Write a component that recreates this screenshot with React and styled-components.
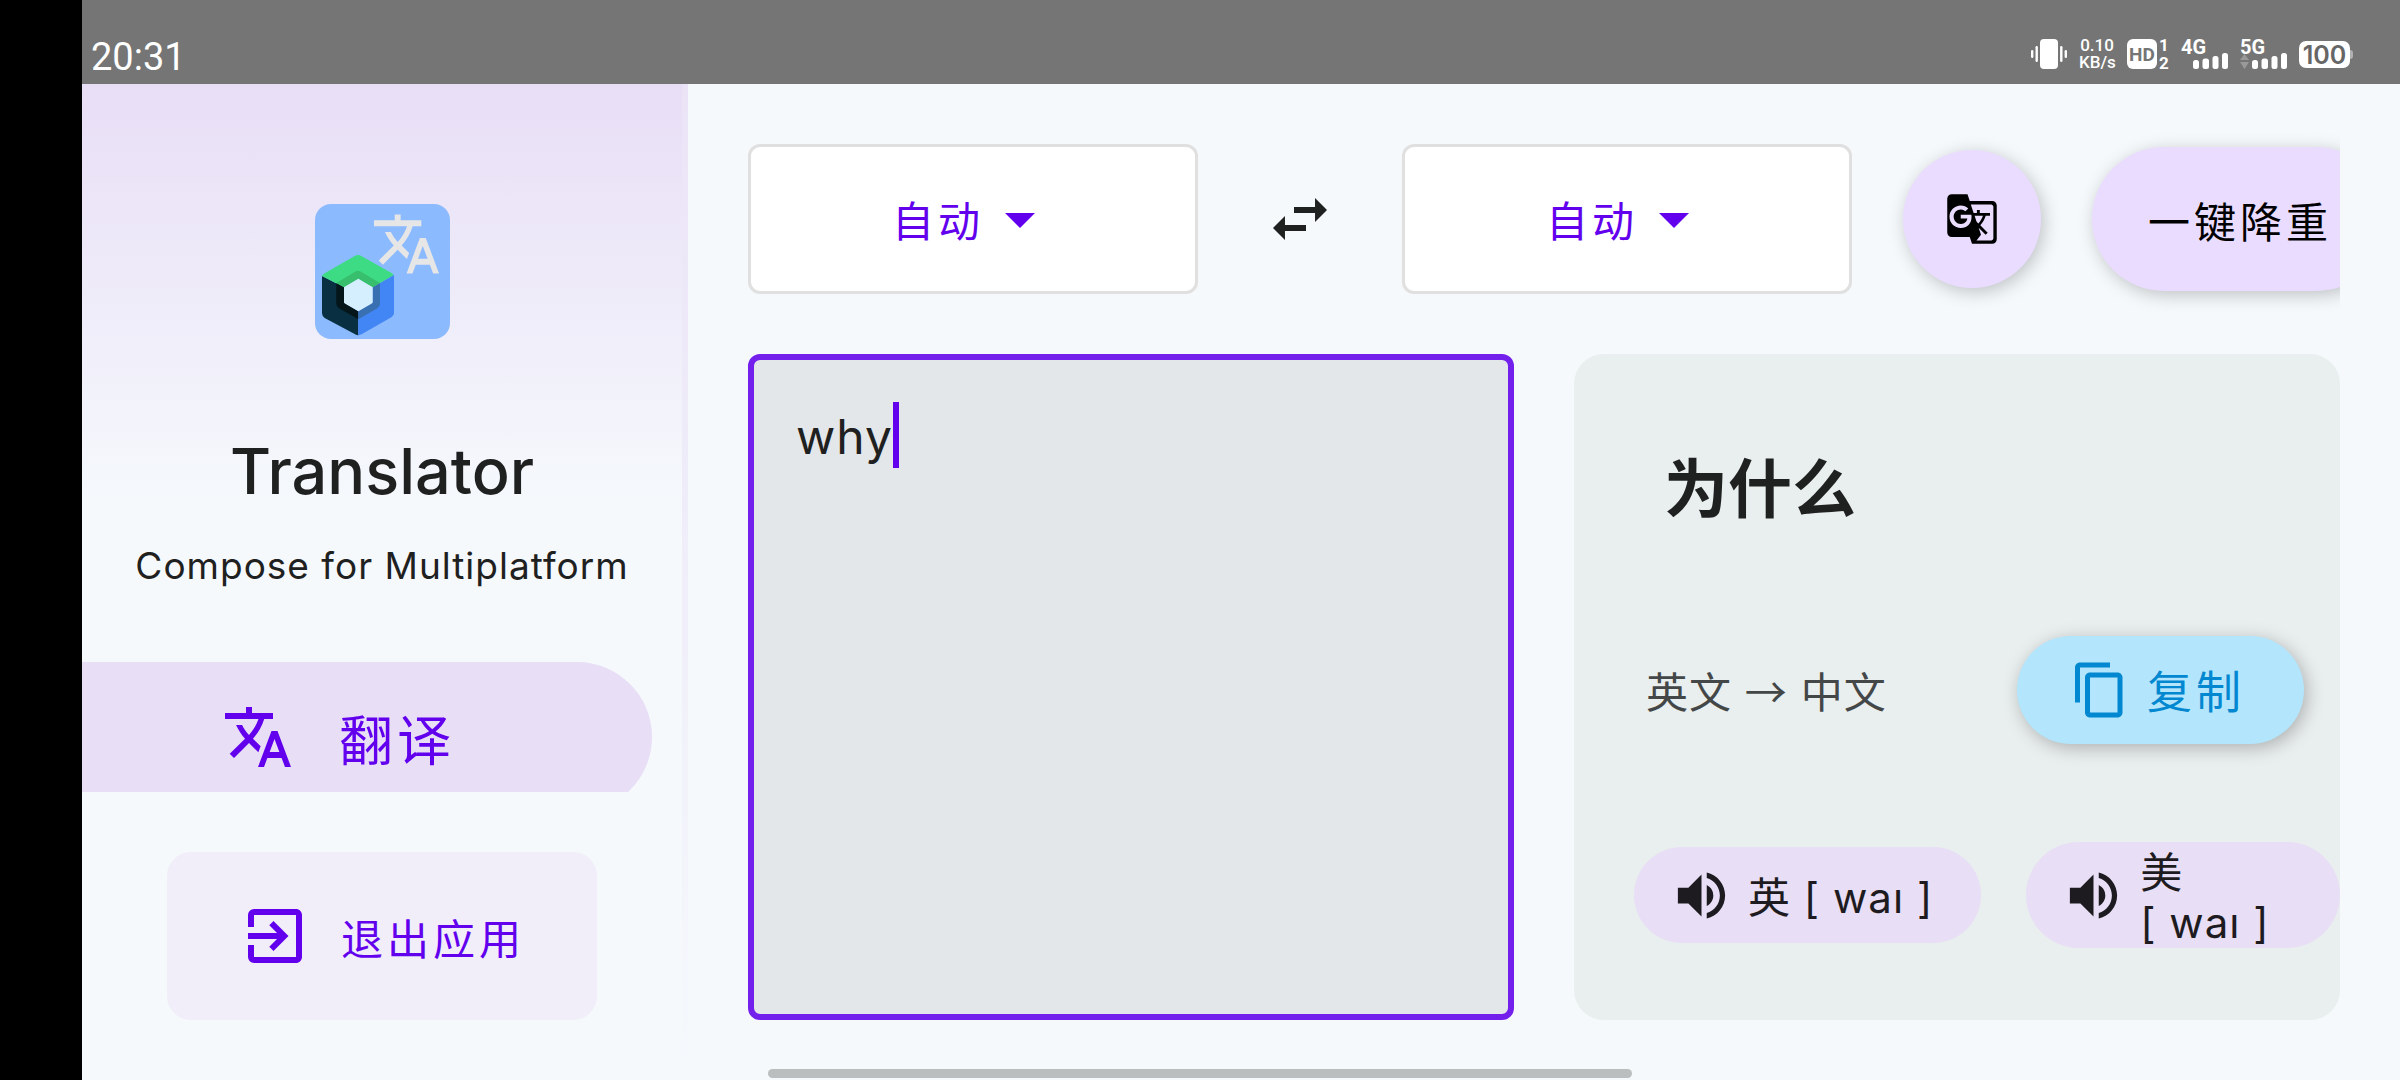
import React, { useLayoutEffect, useRef, useState } from "react";
import styled, { createGlobalStyle } from "styled-components";
import {
  MdArrowDropDown,
  MdContentCopy,
  MdExitToApp,
  MdGTranslate,
  MdSwapHoriz,
  MdTranslate,
  MdVolumeUp,
} from "react-icons/md";

const primary = "#6200ee";
const surface = "#f5f9fc";
const lilac = "#e8def6";
const ink = "#1f2020";
const fonts = `Inter, "Noto Sans CJK SC", "Noto Sans", sans-serif`;

const GlobalStyle = createGlobalStyle`
  * { box-sizing: border-box; }
  body { margin: 0; background: ${surface}; color: ${ink}; font-family: ${fonts}; }
  button, select, textarea { font: inherit; color: inherit; border: 0; margin: 0; }
  button { cursor: pointer; }
  h1, h2, p { margin: 0; }
  svg { flex: none; display: block; overflow: visible; }
`;

const Screen = styled.div`
  display: flex;
  height: 100vh;
  border-left: 82px solid #000;
  flex-direction: column;
  background: ${surface};
`;

const StatusBar = styled.header`
  flex: none;
  display: flex;
  justify-content: space-between;
  align-items: flex-end;
  height: 84px;
  padding: 0 47px 12px 9px;
  background: #757575;
  color: #fff;
`;

const Clock = styled.time`
  font: 400 38px/30px Roboto, sans-serif;
`;

const StatusIcons = styled.div`
  display: flex;
  align-items: center;
  gap: 12px;
  height: 36px;
`;

const NetSpeed = styled.span`
  width: 36px;
  font: 500 17px/17px Roboto, sans-serif;
  text-align: center;
`;

const Body = styled.div`
  flex: 1;
  min-height: 0;
  display: flex;
`;

const Sidebar = styled.aside`
  flex: none;
  width: 600px;
  display: flex;
  flex-direction: column;
  align-items: center;
  padding: 120px 0 60px;
  background: linear-gradient(${lilac}, ${surface} 42%);
`;

const Divider = styled.div`
  flex: none;
  width: 6px;
  background: linear-gradient(#ebe4f7, ${surface});
`;

const AppName = styled.h1`
  margin-top: 90px;
  font-size: 63px;
  line-height: 84px;
  font-weight: 500;
`;

const Tagline = styled.p`
  margin-top: 26px;
  font-size: 37px;
  line-height: 54px;
  letter-spacing: 1px;
`;

const Nav = styled.nav`
  flex: 1;
  min-height: 0;
  width: 100%;
  margin-top: 69px;
  padding-right: 30px;
  overflow: hidden;
`;

const NavItem = styled.button`
  display: flex;
  align-items: center;
  gap: 45px;
  width: 100%;
  height: 150px;
  padding: 0 0 0 140px;
  border-radius: 0 75px 75px 0;
  background: ${lilac};
  color: ${primary};
  font-size: 54px;
  letter-spacing: 4px;
`;

const ExitButton = styled.button`
  flex: none;
  display: flex;
  align-items: center;
  gap: 30px;
  height: 168px;
  margin-top: 60px;
  padding: 0 72px;
  border-radius: 24px;
  background: #f1eefa;
  color: ${primary};
  font-size: 42px;
  letter-spacing: 4px;
`;

const Main = styled.main`
  flex: 1;
  min-width: 0;
  display: flex;
  flex-direction: column;
  gap: 60px;
  padding: 60px;
`;

const Toolbar = styled.div`
  flex: none;
  display: flex;
  align-items: center;
  overflow-x: clip;
`;

const LanguageBox = styled.label`
  flex: none;
  display: flex;
  justify-content: center;
  align-items: center;
  width: 450px;
  height: 150px;
  border: 3px solid #e0e0e0;
  border-radius: 12px;
  background: #fff;
  color: ${primary};
`;

const LanguageSelect = styled.select`
  appearance: none;
  field-sizing: content;
  padding: 6px 0 0 2px;
  background: transparent;
  outline: 0;
  font-size: 42px;
  line-height: 60px;
  letter-spacing: 4px;
`;

const SwapButton = styled.button`
  flex: none;
  display: grid;
  place-items: center;
  width: 144px;
  height: 144px;
  margin: 0 30px;
  padding: 0;
  background: none;
`;

const Fab = styled.button`
  flex: none;
  display: grid;
  place-items: center;
  width: ${(p) => (p.$wide ? "auto" : "138px")};
  height: ${(p) => (p.$wide ? "144px" : "138px")};
  margin-left: 51px;
  padding: ${(p) => (p.$wide ? "0 56px" : "0")};
  border-radius: 72px;
  background: #eadcff;
  color: #000;
  box-shadow: 3px 4px 18px rgba(0, 0, 0, 0.22);
  font-size: 42px;
  letter-spacing: 4px;
`;

const Panels = styled.div`
  flex: 1;
  min-height: 0;
  display: grid;
  grid-template-columns: 1fr 1fr;
  gap: 60px;
`;

const Editor = styled.div`
  position: relative;
  display: flex;
`;

const EditorInput = styled.textarea`
  flex: 1;
  min-width: 0;
  resize: none;
  outline: 0;
  padding: 44px 42px;
  border: 6px solid #7420ec;
  border-radius: 12px;
  background: #e3e7e9;
  font-size: 48px;
  line-height: 66px;
  letter-spacing: 1px;
  caret-color: transparent;
`;

const Caret = styled.span`
  position: absolute;
  top: 48px;
  width: 6px;
  height: 66px;
  background: ${primary};
  pointer-events: none;
`;

const Result = styled.section`
  min-width: 0;
  display: flex;
  flex-direction: column;
  justify-content: space-between;
  padding: 81px 0 72px;
  border-radius: 30px;
  background: #e9eeee;
`;

const ResultTitle = styled.h2`
  padding: 6px 90px 0;
  font-size: 64px;
  line-height: 96px;
  font-weight: 700;
`;

const LanguageRow = styled.div`
  display: flex;
  justify-content: space-between;
  align-items: center;
  padding: 0 36px 0 72px;
  color: #444747;
  font-size: 42px;
  letter-spacing: 1px;
`;

const Arrow = styled.span`
  font-family: "Noto Sans CJK SC", sans-serif;
`;

const CopyButton = styled.button`
  display: flex;
  align-items: center;
  gap: 17px;
  height: 108px;
  padding: 0 59px 0 53px;
  border-radius: 54px;
  background: #b3e5fc;
  color: #0288d1;
  box-shadow: 3px 4px 18px rgba(0, 0, 0, 0.26);
  font-size: 45px;
  letter-spacing: 4px;
`;

const Pronunciations = styled.div`
  display: flex;
  align-items: center;
  gap: 45px;
  padding-left: 60px;
`;

const Pronunciation = styled.button`
  flex: ${(p) => (p.$wrap ? "1 1 0" : "none")};
  min-width: 0;
  display: flex;
  align-items: center;
  gap: 15px;
  min-height: 96px;
  padding: 0 48px 0 36px;
  border-radius: 54px;
  background: ${lilac};
  color: #1d1b20;
  font-size: 42px;
  line-height: 50px;
  letter-spacing: 1px;
  text-align: left;
`;

const Phonetic = styled.span`
  padding-top: 6px;
`;

const HomeIndicator = styled.div`
  position: fixed;
  bottom: 2px;
  left: 32%;
  width: 36%;
  height: 9px;
  border-radius: 5px;
  background: #babebe;
`;

function VibrateIcon() {
  return (
    <svg width="36" height="30" viewBox="0 0 36 30" fill="#fff" aria-label="Vibrate">
      <rect x="9" width="18" height="30" rx="4" />
      <rect x="4.5" y="7" width="2.4" height="16" rx="1.2" />
      <rect y="11" width="2.4" height="8" rx="1.2" />
      <rect x="29.1" y="7" width="2.4" height="16" rx="1.2" />
      <rect x="33.6" y="11" width="2.4" height="8" rx="1.2" />
    </svg>
  );
}

function HdIcon() {
  return (
    <svg width="42" height="30" viewBox="0 0 42 30" fontFamily="Roboto, sans-serif" fontWeight="700" fill="#fff">
      <rect width="30" height="30" rx="6" />
      <text x="15" y="22" textAnchor="middle" fontSize="19" fill="#757575">HD</text>
      <text x="37" y="12" textAnchor="middle" fontSize="17">1</text>
      <text x="37" y="30" textAnchor="middle" fontSize="17">2</text>
    </svg>
  );
}

function SignalIcon({ label, traffic }) {
  return (
    <svg width="47" height="30" viewBox="0 0 47 30" fill="#fff">
      <text x="0" y="14.5" fontFamily="Roboto, sans-serif" fontWeight="700" fontSize="20">{label}</text>
      <rect x="12" y="21" width="6" height="9" rx="2.5" />
      <rect x="21.5" y="19.5" width="6.5" height="10.5" rx="2.5" />
      <rect x="31.5" y="17" width="6" height="13" rx="2.5" />
      <rect x="41" y="14" width="6" height="16" rx="2.5" />
      {traffic && <path d="M0 21l4.5-6 4.5 6zM0 23h9l-4.5 7z" fill="#999" />}
    </svg>
  );
}

function BatteryIcon({ level }) {
  return (
    <svg width="54" height="27" viewBox="0 0 54 27">
      <path d="M51 9q3 0 3 3v3q0 3-3 3z" fill="#b0b0b0" />
      <rect width="51" height="27" rx="7" fill="#fff" />
      <text x="25.5" y="22.5" textAnchor="middle" fontFamily="Inter, sans-serif" fontWeight="600" fontSize="25" fill="#666">
        {level}
      </text>
    </svg>
  );
}

function Logo() {
  return (
    <svg width="135" height="135" viewBox="15 12 405 405" role="img" aria-label="Translator logo">
      <rect x="15" y="12" width="405" height="405" rx="48" fill="#8cbaff" />
      <path
        transform="translate(183.2 25.4) scale(8.87)"
        fill="#e6e6e6"
        d="M12.87 15.07l-2.54-2.51.03-.03c1.74-1.94 2.98-4.17 3.71-6.53H17V4h-7V2H8v2H1v1.99h11.17C11.5 7.92 10.44 9.75 9 11.35 8.07 10.32 7.3 9.19 6.69 8h-2c.73 1.63 1.73 3.17 2.98 4.56l-5.09 5.02L4 19l5-5 3.11 3.11.76-2.04zM18.5 10h-2L12 22h2l1.12-3h4.75L21 22h2l-4.5-12zm-2.62 7l1.62-4.33L19.12 17h-3.24z"
      />
      <path d="M36 228L102 262V308L145 334V406Q140 406 134 402L44 354Q36 348 36 340Z" fill="#083042" />
      <path d="M252 224L188 262V308L145 334V406Q150 405 156 402L244 352Q252 347 252 340Z" fill="#4285f4" />
      <path d="M36 228Q38 224 44 220L134 168Q144 162 154 168L246 220Q250 223 251 225L188 262L145 237L102 262Z" fill="#3ddc84" />
      <path d="M79 249L102 262V308L145 334V358L87 325Q79 320 79 311Z" fill="#041619" />
      <path d="M210 249L188 262V308L145 334V358L202 325Q210 320 210 311Z" fill="#3870b2" />
      <path d="M79 249L134 216Q144 209 154 216L210 249L188 262L145 237L102 262Z" fill="#37bf6e" />
      <path d="M145 236L188 262V306Q188 309 184 311L145 334L106 311Q102 309 102 306V262Z" fill="#d6efff" />
    </svg>
  );
}

function LanguagePicker({ label }) {
  return (
    <LanguageBox>
      <LanguageSelect aria-label={label} defaultValue="auto">
        <option value="auto">自动</option>
      </LanguageSelect>
      <MdArrowDropDown size={72} />
    </LanguageBox>
  );
}

function SourceEditor() {
  const [text, setText] = useState("why");
  const [caretLeft, setCaretLeft] = useState(0);
  const input = useRef(null);

  useLayoutEffect(() => {
    const style = getComputedStyle(input.current);
    const context = document.createElement("canvas").getContext("2d");
    context.font = `${style.fontWeight} ${style.fontSize} ${style.fontFamily}`;
    context.letterSpacing = style.letterSpacing;
    const lastLine = text.split("\n").pop();
    setCaretLeft(48 + Math.round(context.measureText(lastLine).width));
  }, [text]);

  return (
    <Editor>
      <EditorInput
        ref={input}
        aria-label="原文"
        spellCheck={false}
        value={text}
        onChange={(event) => setText(event.target.value)}
      />
      <Caret style={{ left: caretLeft }} />
    </Editor>
  );
}

export default function App() {
  return (
    <Screen>
      <GlobalStyle />
      <StatusBar>
        <Clock>20:31</Clock>
        <StatusIcons>
          <VibrateIcon />
          <NetSpeed>
            0.10
            <br />
            KB/s
          </NetSpeed>
          <HdIcon />
          <SignalIcon label="4G" />
          <SignalIcon label="5G" traffic />
          <BatteryIcon level={100} />
        </StatusIcons>
      </StatusBar>
      <Body>
        <Sidebar>
          <Logo />
          <AppName>Translator</AppName>
          <Tagline>Compose for Multiplatform</Tagline>
          <Nav>
            <NavItem type="button">
              <MdTranslate size={72} />
              翻译
            </NavItem>
          </Nav>
          <ExitButton type="button">
            <MdExitToApp size={72} />
            退出应用
          </ExitButton>
        </Sidebar>
        <Divider />
        <Main>
          <Toolbar>
            <LanguagePicker label="源语言" />
            <SwapButton type="button" aria-label="交换语言">
              <MdSwapHoriz size={72} />
            </SwapButton>
            <LanguagePicker label="目标语言" />
            <Fab type="button" aria-label="翻译">
              <MdGTranslate size={54} />
            </Fab>
            <Fab type="button" $wide>
              一键降重
            </Fab>
          </Toolbar>
          <Panels>
            <SourceEditor />
            <Result>
              <ResultTitle>为什么</ResultTitle>
              <LanguageRow>
                <span>
                  英文 <Arrow>→</Arrow> 中文
                </span>
                <CopyButton type="button">
                  <MdContentCopy size={60} />
                  复制
                </CopyButton>
              </LanguageRow>
              <Pronunciations>
                <Pronunciation type="button">
                  <MdVolumeUp size={63} />
                  <Phonetic>英 [ waı ]</Phonetic>
                </Pronunciation>
                <Pronunciation type="button" $wrap>
                  <MdVolumeUp size={63} />
                  <Phonetic>美 [&nbsp;waı&nbsp;]</Phonetic>
                </Pronunciation>
              </Pronunciations>
            </Result>
          </Panels>
        </Main>
      </Body>
      <HomeIndicator />
    </Screen>
  );
}
